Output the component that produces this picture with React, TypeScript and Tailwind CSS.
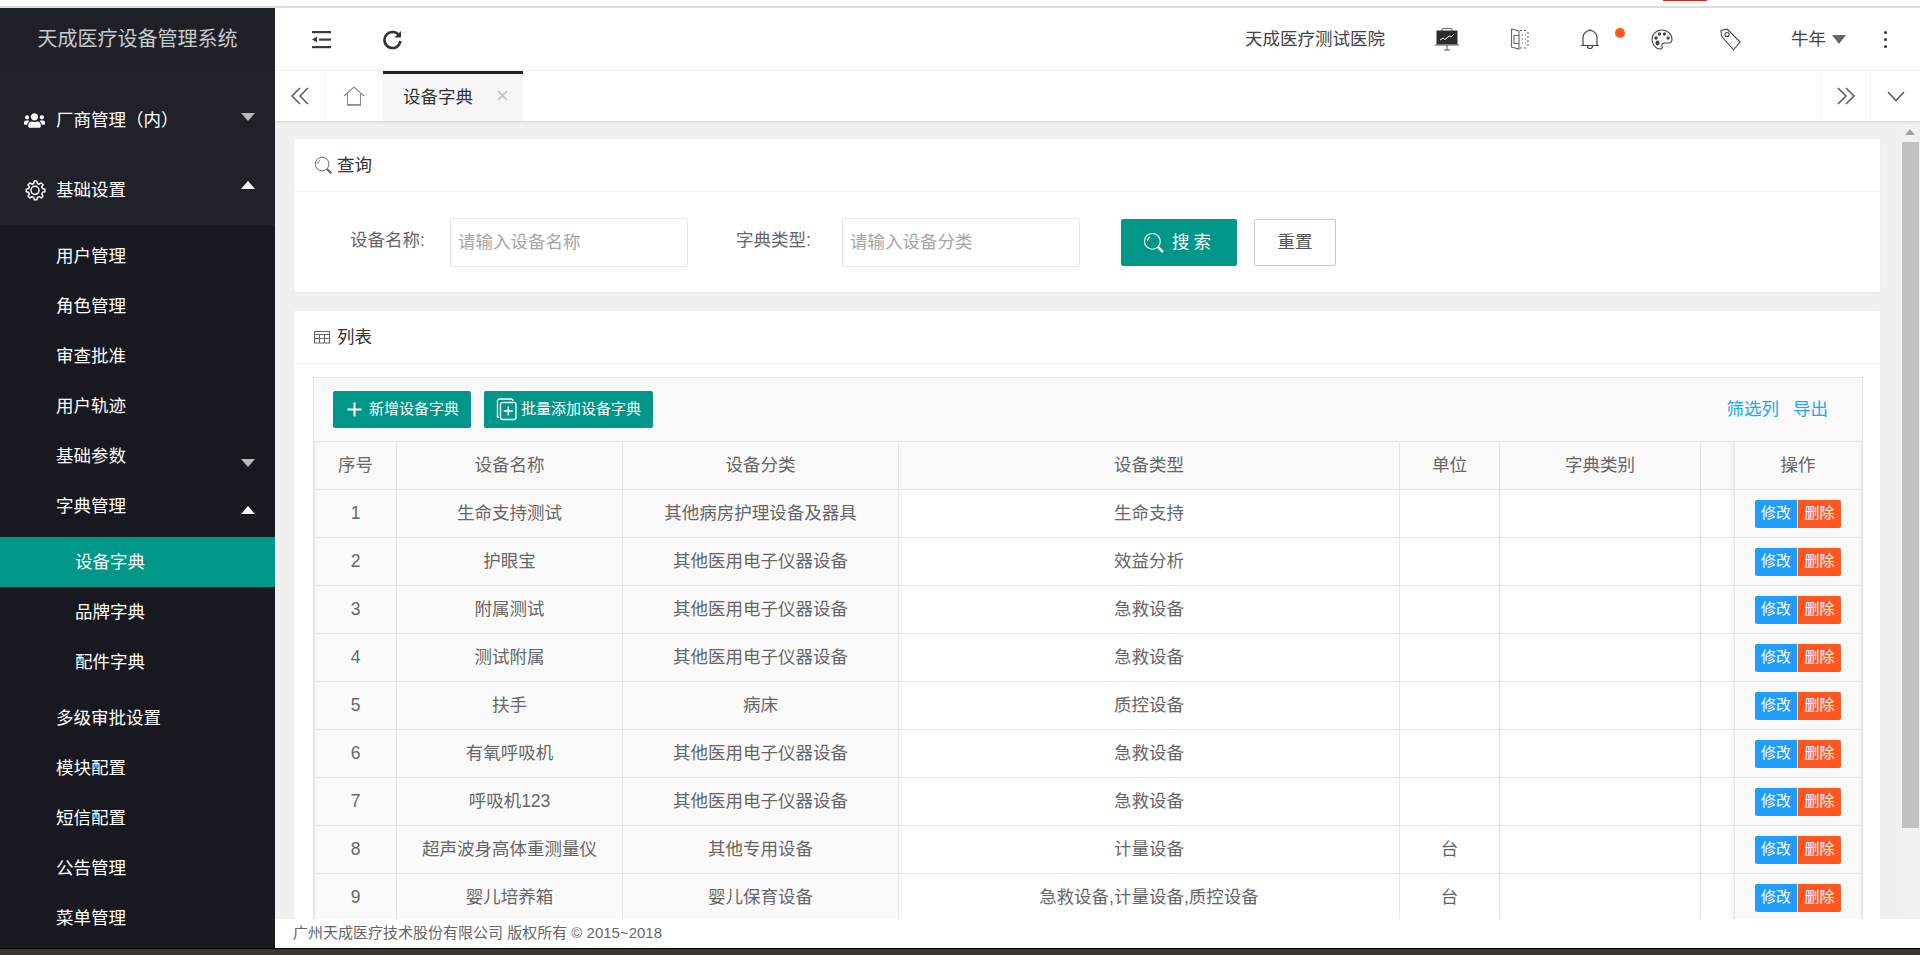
import React from "react";
import { FaUsers } from "react-icons/fa";

const font = { fontFamily: '"Liberation Sans", "Noto Sans CJK SC", sans-serif' };

const SearchIcon = ({ className = "" }: { className?: string }) => (
  <svg viewBox="0 0 20 20" className={className} fill="none" stroke="currentColor" strokeWidth="1">
    <circle cx="8.5" cy="8.5" r="7.2" />
    <path d="M4 8.5a4.5 4.5 0 0 1 2.5-4" />
    <path d="M13.6 13.6l4.6 4.6" strokeWidth="2.2" />
  </svg>
);

const Up = ({ className = "" }: { className?: string }) => (
  <div className={`h-0 w-0 border-x-[7.5px] border-x-transparent border-b-[8px] border-b-white ${className}`} />
);
const Down = ({ className = "" }: { className?: string }) => (
  <div className={`h-0 w-0 border-x-[7.5px] border-x-transparent border-t-[8px] border-t-[#b9b9bb] ${className}`} />
);

const Gear = () => (
  <svg viewBox="0 0 24 24" width="22" height="22" fill="none" stroke="#fff" strokeWidth="1.6" strokeLinejoin="round">
    <path d="M12 1.8l2 .5.6 2.6 1.9.8 2.3-1.4 2 2-1.4 2.3.8 1.9 2.6.6v2.8l-2.6.6-.8 1.9 1.4 2.3-2 2-2.3-1.4-1.9.8-.6 2.6h-2.8l-.6-2.6-1.9-.8-2.3 1.4-2-2 1.4-2.3-.8-1.9-2.6-.6v-2.8l2.6-.6.8-1.9-1.4-2.3 2-2 2.3 1.4 1.9-.8.6-2.6z" />
    <circle cx="12" cy="12.4" r="4.4" />
  </svg>
);

function SideItem({ label, indent = false, active = false, arrow }: { label: string; indent?: boolean; active?: boolean; arrow?: "up" | "down" }) {
  return (
    <div className={`flex h-[50px] items-center text-[17.5px] text-white ${indent ? "pl-[75px]" : "pl-[56px]"} ${active ? "bg-[#009688]" : ""} relative`}>
      {label}
      {arrow === "up" && <Up className="absolute left-[241px] top-[25px]" />}
      {arrow === "down" && <Down className="absolute left-[241px] top-[28px]" />}
    </div>
  );
}

function Sidebar() {
  return (
    <aside className="flex w-[275px] shrink-0 flex-col overflow-hidden bg-[#20222a]">
      <div className="flex h-[61px] items-center justify-center bg-[#1f2128] text-[20px] text-[#c8c9cb] shadow-[0_1px_2px_rgba(0,0,0,0.15)]">
        天成医疗设备管理系统
      </div>
      <div className="h-[16px]" />
      <div className="relative flex h-[70px] items-center pl-[24px] text-[17.5px] text-white">
        <FaUsers className="mr-[11px] text-[21px]" />
        厂商管理（内）
        <Down className="absolute left-[241px] top-[28px]" />
      </div>
      <div className="relative flex h-[70px] items-center pl-[24px] text-[17.5px] text-white">
        <div className="mr-[10px]"><Gear /></div>
        基础设置
        <Up className="absolute left-[241px] top-[26px]" />
      </div>
      <div className="flex-1 rounded-t-[3px] bg-[#181920] pt-[6px]">
        <SideItem label="用户管理" />
        <SideItem label="角色管理" />
        <SideItem label="审查批准" />
        <SideItem label="用户轨迹" />
        <SideItem label="基础参数" arrow="down" />
        <SideItem label="字典管理" arrow="up" />
        <div className="py-[6px]">
          <SideItem label="设备字典" indent active />
          <SideItem label="品牌字典" indent />
          <SideItem label="配件字典" indent />
        </div>
        <SideItem label="多级审批设置" />
        <SideItem label="模块配置" />
        <SideItem label="短信配置" />
        <SideItem label="公告管理" />
        <SideItem label="菜单管理" />
      </div>
    </aside>
  );
}

function Header() {
  return (
    <header className="flex h-[63px] shrink-0 items-center border-b border-[#f3f3f3] bg-white text-[#333]">
      <svg className="ml-[36px] h-[19px] w-[21px]" viewBox="0 0 21 19" fill="#3c3c3c">
        <rect x="1" y="1" width="19" height="2.2" />
        <rect x="8" y="8.5" width="12" height="2.2" />
        <rect x="1" y="16" width="19" height="2.2" />
        <path d="M6 6.5v6l-5-3z" />
      </svg>
      <svg className="ml-[50px] h-[21px] w-[21px]" viewBox="0 0 21 21" fill="none" stroke="#333" strokeWidth="2.6">
        <path d="M17.5 7.2A8 8 0 1 0 18.4 12" />
        <path d="M19 2v6.6h-6.6z" fill="#333" stroke="none" />
      </svg>
      <div className="ml-auto flex items-center">
        <span className="text-[17.5px] text-[#444]">天成医疗测试医院</span>
        <svg className="ml-[50px] h-[23px] w-[24px]" viewBox="0 0 24 23" fill="none">
          <rect x="7" y="0.5" width="10" height="3" rx="1" stroke="#666" />
          <rect x="1.5" y="2.5" width="21" height="14" fill="#2d2d2d" />
          <path d="M0 17h24" stroke="#555" />
          <path d="M12 17v5M9 22h6" stroke="#555" />
          <path d="M5 12l3-2 2 1.5 4-3.5 2 1 3-3" stroke="#fff" strokeWidth="1" />
        </svg>
        <svg className="ml-[51px] h-[22px] w-[19px]" viewBox="0 0 19 22" fill="none" stroke="#666" strokeWidth="1.1">
          <path d="M9 3L1.5 1v18L9 21zM4 7.5h5v8H4z" />
          <path d="M10 2.5h8M18 4v15M10 20h7M12 7h1M15 7h1M12 11h1M15 11h1M12 15h1M15 15h1" strokeDasharray="2 2" />
        </svg>
        <svg className="ml-[51px] h-[21px] w-[20px]" viewBox="0 0 20 21" fill="none" stroke="#444" strokeWidth="1.2">
          <path d="M1 16.500h18M3 16V8.500a7 7 0 0 1 14 0V16" />
          <path d="M8.500 1h3M7.500 17a2.500 2.500 0 0 0 5 0" />
        </svg>
        <div className="ml-[15px] mt-[-12px] h-[10px] w-[10px] rounded-full bg-[#ff5722]" />
        <svg className="ml-[26px] h-[21px] w-[22px]" viewBox="0 0 22 21" fill="none" stroke="#444" strokeWidth="1.1">
          <path d="M11 1C5 1 1 5.5 1 10.5S5 20 9 20c2.5 0 2.5-1.5 2-3-.5-2 .5-3 3-3h3.5c2.5 0 3.5-1.5 3.5-3.5C21 5 16.500 1 11 1z" />
          <circle cx="5" cy="9" r="1.2" fill="#444" />
          <circle cx="8.500" cy="5" r="1.1" fill="#444" />
          <circle cx="13.500" cy="5" r="1.1" fill="#444" />
          <circle cx="17" cy="9" r="1.1" fill="#444" />
          <ellipse cx="6.500" cy="14" rx="1.500" ry="1.900" fill="#444" />
        </svg>
        <svg className="ml-[47px] h-[23px] w-[21px]" viewBox="0 0 21 23" fill="none" stroke="#444" strokeWidth="1.1">
          <path d="M1 2.500 7 1l13 13-6.500 8L1.500 8z" strokeLinejoin="round" />
          <circle cx="7" cy="6.500" r="2" />
        </svg>
        <span className="ml-[50px] text-[17.5px] text-[#444]">牛年</span>
        <div className="ml-[6px] h-0 w-0 border-x-[7.5px] border-x-transparent border-t-[9px] border-t-[#666]" />
        <div className="ml-[38px] mr-[33px] flex flex-col gap-[4px]">
          <div className="h-[3px] w-[3px] rounded-full bg-[#333]" />
          <div className="h-[3px] w-[3px] rounded-full bg-[#333]" />
          <div className="h-[3px] w-[3px] rounded-full bg-[#333]" />
        </div>
      </div>
    </header>
  );
}

const Chev = ({ d }: { d: string }) => (
  <svg width="20" height="20" viewBox="0 0 20 20" fill="none" stroke="#5f5f5f" strokeWidth="1.6">
    <path d={d} />
  </svg>
);

function Tabs() {
  return (
    <div className="relative z-10 flex h-[50px] shrink-0 items-stretch bg-white shadow-[0_1px_2px_rgba(0,0,0,0.12)]">
      <div className="flex w-[50px] items-center justify-center border-r border-[#f3f3f3]">
        <Chev d="M10 2L2 10l8 8M18 2l-8 8 8 8" />
      </div>
      <div className="flex w-[58px] items-center justify-center">
        <svg width="22" height="20" viewBox="0 0 22 20" fill="none" stroke="#8a8a8a" strokeWidth="1.1">
          <path d="M1 10L11 1l10 9M4.500 8v11h13V8" />
          <path d="M4.500 18.800h13" strokeWidth="1.600" />
        </svg>
      </div>
      <div className="relative flex w-[140px] items-center border-t-[3px] border-[#20222a] bg-[#f6f6f6] pl-[20px] text-[17.5px] text-[#333]">
        设备字典
        <span className="absolute left-[113px] top-[12px] text-[22px] leading-[20px] text-[#c2c2c2]">×</span>
      </div>
      <div className="ml-auto flex w-[50px] items-center justify-center border-l border-[#f3f3f3]">
        <Chev d="M2 2l8 8-8 8M10 2l8 8-8 8" />
      </div>
      <div className="flex w-[50px] items-center justify-center border-l border-[#f3f3f3]">
        <Chev d="M2 6l8 8.500L18 6" />
      </div>
    </div>
  );
}

const rows: [string, string, string, string, string][] = [
  ["1", "生命支持测试", "其他病房护理设备及器具", "生命支持", ""],
  ["2", "护眼宝", "其他医用电子仪器设备", "效益分析", ""],
  ["3", "附属测试", "其他医用电子仪器设备", "急救设备", ""],
  ["4", "测试附属", "其他医用电子仪器设备", "急救设备", ""],
  ["5", "扶手", "病床", "质控设备", ""],
  ["6", "有氧呼吸机", "其他医用电子仪器设备", "急救设备", ""],
  ["7", "呼吸机123", "其他医用电子仪器设备", "急救设备", ""],
  ["8", "超声波身高体重测量仪", "其他专用设备", "计量设备", "台"],
  ["9", "婴儿培养箱", "婴儿保育设备", "急救设备,计量设备,质控设备", "台"],
];

function QueryCard() {
  return (
    <section className="h-[153px] shrink-0 rounded-[2px] bg-white shadow-[0_1px_2px_rgba(0,0,0,0.05)]">
      <div className="flex h-[53px] items-center border-b border-[#f6f6f6] pl-[20px] text-[17.5px] text-[#333]">
        <SearchIcon className="mr-[4px] h-[19px] w-[19px] text-[#666]" />
        查询
      </div>
      <div className="flex items-start pt-[26px]">
        <span className="ml-[56px] w-[84px] pt-[10px] text-[17.5px] leading-[25px] text-[#666]">设备名称:</span>
        <div className="ml-[16px] flex h-[49px] w-[238px] items-center rounded-[2px] border border-[#e6e6e6] pl-[7px] text-[17.5px] text-[#a5a5a5]">请输入设备名称</div>
        <span className="ml-[48px] w-[84px] pt-[10px] text-[17.5px] leading-[25px] text-[#666]">字典类型:</span>
        <div className="ml-[22px] flex h-[49px] w-[238px] items-center rounded-[2px] border border-[#e6e6e6] pl-[7px] text-[17.5px] text-[#a5a5a5]">请输入设备分类</div>
        <button className="ml-[41px] mt-[1px] flex h-[47px] w-[116px] items-center justify-center rounded-[2px] bg-[#009688] text-[17.5px] tracking-[4px] text-white">
          <SearchIcon className="mr-[7px] h-[22px] w-[22px]" />
          搜索
        </button>
        <button className="ml-[17px] mt-[1px] h-[47px] w-[82px] rounded-[2px] border border-[#c9c9c9] text-[17.5px] text-[#555]">重置</button>
      </div>
    </section>
  );
}

const th = "border border-[#e6e6e6] font-normal text-[17.5px] text-[#666] bg-[#f9f9f9] text-center p-0";
const td = "border border-[#e6e6e6] text-[17.5px] text-[#666] text-center p-0";

function ListCard() {
  return (
    <section className="mt-[19px] flex-1 rounded-[2px] bg-white">
      <div className="flex h-[53px] items-center border-b border-[#f6f6f6] pl-[20px] text-[17.5px] text-[#333]">
        <svg className="mr-[7px] h-[14px] w-[16px]" viewBox="0 0 16 14" fill="none" stroke="#666" strokeWidth="1">
          <rect x="0.500" y="1.500" width="15" height="11.500" />
          <path d="M0.500 4.500h15M0.500 8.500h15M5.500 4.500v8.500M10.500 4.500v8.500" />
        </svg>
        列表
      </div>
      <div className="ml-[19px] mr-[17px] mt-[13px] border-x border-t border-[#e6e6e6]">
        <div className="flex h-[63px] items-center bg-[#f9f9f9] pl-[19px]">
          <button className="flex h-[37px] w-[138px] items-center rounded-[2px] bg-[#009688] pl-[14px] text-[15px] text-white">
            <svg className="mr-[7px] h-[15px] w-[15px]" viewBox="0 0 15 15" fill="#fff">
              <rect x="6.500" y="0.500" width="2" height="14" />
              <rect x="0.500" y="6.500" width="14" height="2" />
            </svg>
            新增设备字典
          </button>
          <button className="ml-[13px] flex h-[37px] w-[169px] items-center rounded-[2px] bg-[#009688] pl-[12px] text-[15px] text-white">
            <svg className="mr-[4px] h-[23px] w-[21px]" viewBox="0 0 21 23" fill="none" stroke="#fff" strokeWidth="1.300">
              <path d="M3 19H1.500V3A2 2 0 0 1 3.500 1H15a2 2 0 0 1 2 2" />
              <rect x="4.500" y="4.500" width="15.500" height="17" rx="2" />
              <path d="M12.300 8.500v9M7.800 13h9" strokeWidth="1.500" />
            </svg>
            批量添加设备字典
          </button>
          <span className="ml-auto text-[17.5px] text-[#23a7f1]">筛选列</span>
          <span className="ml-[14px] mr-[34px] text-[17.5px] text-[#23a7f1]">导出</span>
        </div>
        <table className="w-full table-fixed border-collapse">
          <colgroup>
            <col className="w-[82px]" />
            <col className="w-[226px]" />
            <col className="w-[276px]" />
            <col className="w-[501px]" />
            <col className="w-[100px]" />
            <col className="w-[201px]" />
            <col className="w-[34px]" />
            <col />
          </colgroup>
          <thead>
            <tr className="h-[48px]">
              <th className={th}>序号</th>
              <th className={th}>设备名称</th>
              <th className={`${th} shadow-[2px_0_4px_rgba(0,0,0,0.05)]`}>设备分类</th>
              <th className={th}>设备类型</th>
              <th className={th}>单位</th>
              <th className={th}>字典类别</th>
              <th className={th}></th>
              <th className={`${th} shadow-[-3px_0_5px_rgba(0,0,0,0.07)]`}>操作</th>
            </tr>
          </thead>
          <tbody>
            {rows.map((r) => (
              <tr key={r[0]} className="h-[48px]">
                <td className={`${td} bg-[#fafafa]`}>{r[0]}</td>
                <td className={`${td} bg-[#fafafa]`}>{r[1]}</td>
                <td className={`${td} bg-[#fafafa] shadow-[2px_0_4px_rgba(0,0,0,0.05)]`}>{r[2]}</td>
                <td className={td}>{r[3]}</td>
                <td className={td}>{r[4]}</td>
                <td className={td}></td>
                <td className={td}></td>
                <td className={`${td} bg-[#f9f9f9] shadow-[-3px_0_5px_rgba(0,0,0,0.07)]`}>
                  <div className="flex justify-center">
                    <span className="flex h-[28px] w-[43px] items-center justify-center rounded-l-[2px] border-r border-[#cfe9ff] bg-[#1e9fff] text-[15px] text-white">修改</span>
                    <span className="flex h-[28px] w-[43px] items-center justify-center rounded-r-[2px] bg-[#ff5722] text-[15px] text-white">删除</span>
                  </div>
                </td>
              </tr>
            ))}
          </tbody>
        </table>
      </div>
    </section>
  );
}

function Scrollbar() {
  return (
    <div className="flex w-[20px] shrink-0 flex-col items-center bg-[#f1f1f1]">
      <div className="mt-[8px] h-0 w-0 border-x-[5px] border-x-transparent border-b-[6px] border-b-[#a3a3a3]" />
      <div className="mt-[7px] h-[686px] w-[17px] bg-[#c1c1c1]" />
    </div>
  );
}

export default function App() {
  return (
    <div style={font} className="flex h-[955px] w-[1920px] flex-col overflow-hidden bg-white">
      <div className="flex h-[8px] shrink-0 items-start justify-end border-b-2 border-[#dfdde3] bg-white">
        <div className="mr-[213px] h-[1px] w-[44px] bg-[#d9281e]" />
      </div>
      <div className="flex min-h-0 flex-1">
        <Sidebar />
        <main className="flex min-w-0 flex-1 flex-col">
          <Header />
          <Tabs />
          <div className="flex min-h-0 flex-1 overflow-hidden bg-[#f0f0f0]">
            <div className="flex min-w-0 flex-1 flex-col pl-[19px] pr-[20px] pt-[18px]">
              <QueryCard />
              <ListCard />
            </div>
            <Scrollbar />
          </div>
          <footer className="z-10 flex h-[29px] shrink-0 items-center bg-white pl-[18px] text-[15px] text-[#666]">
            广州天成医疗技术股份有限公司 版权所有 © 2015~2018
          </footer>
        </main>
      </div>
      <div className="h-[7px] shrink-0 border-t border-black bg-[#3c3631]" />
    </div>
  );
}
